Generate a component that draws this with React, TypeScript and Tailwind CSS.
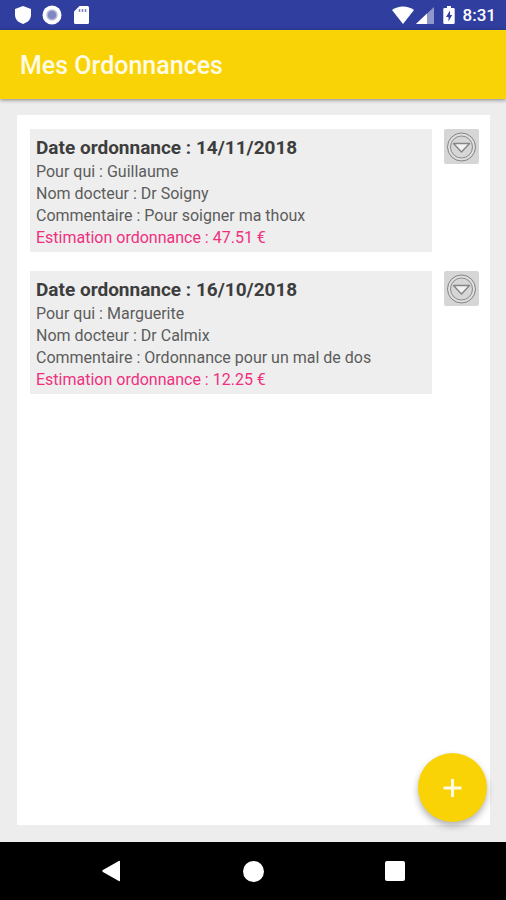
type Prescription = {
  date: string;
  patient: string;
  doctor: string;
  comment: string;
  estimate: string;
};

const prescriptions: Prescription[] = [
  {
    date: "14/11/2018",
    patient: "Guillaume",
    doctor: "Dr Soigny",
    comment: "Pour soigner ma thoux",
    estimate: "47.51 €",
  },
  {
    date: "16/10/2018",
    patient: "Marguerite",
    doctor: "Dr Calmix",
    comment: "Ordonnance pour un mal de dos",
    estimate: "12.25 €",
  },
];

function StatusBar() {
  return (
    <div className="flex h-[30px] items-center justify-between bg-[#303f9f] pr-[10px] pl-[13px] text-white">
      <div className="flex items-center gap-[9px]">
        <svg className="h-5 w-5" viewBox="0 0 20 20" fill="currentColor" aria-hidden="true">
          <path d="M10 1 18 4v6c0 4.500-3.500 7.500-8 9-4.500-1.500-8-4.500-8-9V4z" />
        </svg>
        <svg className="h-5 w-5" viewBox="0 0 20 20" aria-hidden="true">
          <circle cx="10" cy="10" r="9.500" fill="#fff" />
          <circle cx="10" cy="10" r="5" fill="#8088c2" stroke="#b9bee0" strokeWidth="1.500" />
        </svg>
        <svg className="h-5 w-5" viewBox="0 0 20 20" aria-hidden="true">
          <path d="M8.500 1H16.500a1.500 1.500 0 0 1 1.500 1.500v15a1.500 1.500 0 0 1-1.500 1.500h-12A1.500 1.500 0 0 1 3 17.500V6.500z" fill="#fff" />
          <path d="M8.500 4v3M11.500 4v3M14.500 4v3" stroke="#8088c2" strokeWidth="1.600" />
        </svg>
      </div>
      <div className="flex items-center">
        <svg className="h-5 w-6" viewBox="0 0 24 20" fill="currentColor" aria-hidden="true">
          <path d="M1 5C7 .2 17 .2 23 5L12 19z" />
        </svg>
        <svg className="h-5 w-5" viewBox="0 0 20 20" aria-hidden="true">
          <path d="M1 19 19 2v17z" fill="#8f97cb" />
          <path d="M1 19 12 8.600V19z" fill="#fff" />
        </svg>
        <svg className="ml-2 h-5 w-3" viewBox="0 0 12 20" aria-hidden="true">
          <path d="M4 1h4v2h2.500a1.200 1.200 0 0 1 1.200 1.200v13.600a1.200 1.200 0 0 1-1.200 1.200h-9A1.200 1.200 0 0 1 .3 17.800V4.200A1.200 1.200 0 0 1 1.500 3H4z" fill="#fff" />
          <path d="M7 5.500 3 12h2.500v4.500L9.200 10H7z" fill="#303f9f" />
        </svg>
        <span className="ml-2 text-[17px] leading-5 font-medium">8:31</span>
      </div>
    </div>
  );
}

function PrescriptionRow({ item }: { item: Prescription }) {
  return (
    <li className="flex items-start gap-3">
      <article className="min-w-0 flex-1 bg-[#eeeeee] px-[6px] pt-[6px] pb-[3px] text-[16px] leading-[22px] text-[#5c5c5c]">
        <h2 className="text-[19px] leading-[26px] font-bold text-[#3d3d3d]">
          Date ordonnance : {item.date}
        </h2>
        <p>Pour qui : {item.patient}</p>
        <p>Nom docteur : {item.doctor}</p>
        <p>Commentaire : {item.comment}</p>
        <p className="text-[#f0307f]">Estimation ordonnance : {item.estimate}</p>
      </article>
      <button
        type="button"
        aria-label="Options"
        className="flex h-[35px] w-[35px] shrink-0 items-center justify-center rounded-xs bg-[#d6d6d6]"
      >
        <svg className="h-[31px] w-[31px]" viewBox="0 0 31 31" fill="none" stroke="#858585" aria-hidden="true">
          <circle cx="15.500" cy="16" r="14" />
          <circle cx="15.500" cy="16" r="11" stroke="#8c8c8c" />
          <circle cx="15.500" cy="16" r="12.500" stroke="#e4e4e4" />
          <path d="M7.500 12.500h16l-8 8.500z" fill="#f3f3f3" strokeWidth="1.400" strokeLinejoin="round" />
        </svg>
      </button>
    </li>
  );
}

function NavigationBar() {
  return (
    <nav className="grid h-[58px] grid-cols-3 bg-black px-10 text-white">
      <button type="button" aria-label="Retour" className="flex items-center justify-center">
        <svg className="h-6 w-6" viewBox="0 0 24 24" fill="currentColor" aria-hidden="true">
          <path d="M21 2.500v19a.8.8 0 0 1-1.200.6L3.900 12.900a1 1 0 0 1 0-1.800L19.800 1.900a.8.8 0 0 1 1.200.6z" />
        </svg>
      </button>
      <button type="button" aria-label="Accueil" className="flex items-center justify-center">
        <span className="h-[21px] w-[21px] rounded-full bg-white" />
      </button>
      <button type="button" aria-label="Applications récentes" className="flex items-center justify-center">
        <span className="h-5 w-5 rounded-xs bg-white" />
      </button>
    </nav>
  );
}

export default function App() {
  return (
    <div className="flex min-h-screen flex-col bg-[#ededed] font-[Roboto,sans-serif]">
      <StatusBar />
      <header className="z-10 flex h-[69px] items-center bg-[#f9d305] px-5 pt-[3px] shadow-[0_1px_4px_rgba(0,0,0,0.45)]">
        <h1 className="text-[25px] leading-8 font-medium text-[#fffbe6]">Mes Ordonnances</h1>
      </header>
      <main className="relative flex flex-1 flex-col pt-4 pr-4 pb-[17px] pl-[17px]">
        <ul className="flex flex-1 flex-col gap-[19px] bg-white py-[14px] pr-[11px] pl-[13px]">
          {prescriptions.map((item) => (
            <PrescriptionRow key={item.date} item={item} />
          ))}
        </ul>
        <button
          type="button"
          aria-label="Ajouter une ordonnance"
          className="absolute right-[19px] bottom-5 flex h-[69px] w-[69px] items-center justify-center rounded-full bg-[#f9d305] shadow-[0_4px_7px_rgba(0,0,0,0.3)]"
        >
          <svg className="h-5 w-5" viewBox="0 0 20 20" stroke="#fffbe6" strokeWidth="3" aria-hidden="true">
            <path d="M9.500 1v18M.5 10h18" />
          </svg>
        </button>
      </main>
      <NavigationBar />
    </div>
  );
}
